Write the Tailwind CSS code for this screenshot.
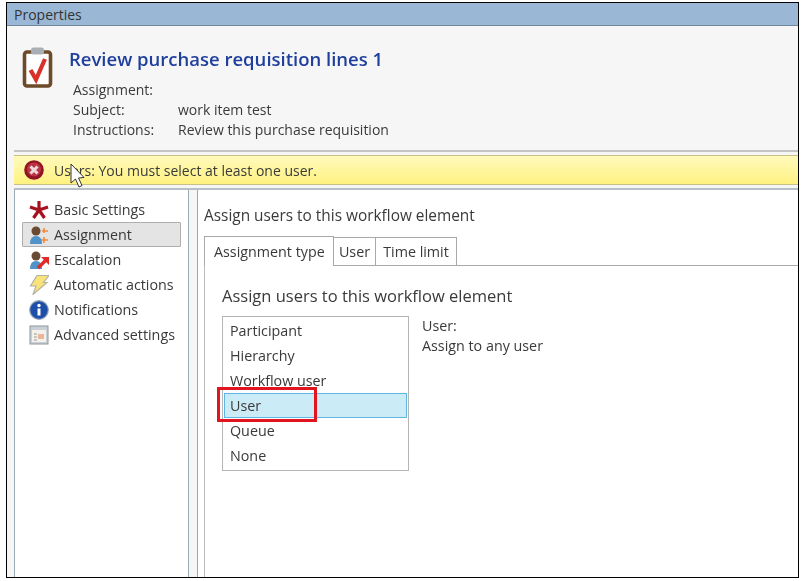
<!DOCTYPE html>
<html lang="en">
<head>
    <meta charset="UTF-8">
    <title>Properties</title>
    <script src="https://cdn.jsdelivr.net/npm/@tailwindcss/browser@4"></script>
</head>
<body class="bg-white font-['Open_Sans','Noto_Sans',sans-serif] text-[14.3px] text-[#3a3a3a] overflow-hidden">
    <div class="relative mt-[2px] ml-[6px] w-[793px] h-[576px] border border-black bg-[#f6f6f6] flex flex-col overflow-hidden">
        <div class="blur-[0.35px] flex flex-col flex-1 min-h-0">
        <!-- title bar -->
        <div class="h-[23px] shrink-0 bg-[#9ab8d5] border-b border-[#6f8599] pl-[7px] flex items-center text-[14px] text-[#333]">Properties</div>

        <!-- work item header -->
        <div class="h-[124px] shrink-0 flex pl-[15px] pt-[20px]">
            <svg class="w-[32px] h-[44px] shrink-0" viewBox="0 0 32 44">
                <rect x="2.5" y="6" width="26" height="34" rx="2.5" fill="#fff" stroke="#6d4a2a" stroke-width="3.6"/>
                <rect x="9" y="1.5" width="13" height="7" rx="2.5" fill="#a9b0b5"/>
                <path d="M8.5 24 L14 33.5 L23 13" fill="none" stroke="#d9302a" stroke-width="4.2"/>
            </svg>
            <div class="ml-[15px]">
                <div class="h-[28px] flex items-center text-[18.5px] font-semibold text-[#1f3f9c] -mt-[1px]">Review purchase requisition lines 1</div>
                <div class="mt-[6px] ml-[4px] grid grid-cols-[105px_1fr] auto-rows-[20px] items-center text-[14px]">
                    <span>Assignment:</span><span></span>
                    <span>Subject:</span><span>work item test</span>
                    <span>Instructions:</span><span>Review this purchase requisition</span>
                </div>
            </div>
        </div>

        <!-- error bar -->
        <div class="ml-[7px] shrink-0 h-[2px] bg-[#c4c4c4]"></div>
        <div class="ml-[7px] mt-[3px] shrink-0 h-[30px] bg-gradient-to-b from-[#fff9bb] to-[#fff27f] border-y border-[#c9c088] flex items-center pl-[10px] text-[14px]">
            <svg class="w-[20px] h-[20px] shrink-0" viewBox="0 0 20 20">
                <circle cx="10" cy="10" r="9.8" fill="#8f1524"/>
                <circle cx="10" cy="9.5" r="7" fill="#bd3544"/>
                <path d="M6.5 6.5 L13.5 13.5 M13.5 6.5 L6.5 13.5" stroke="#eddcdc" stroke-width="3"/>
            </svg>
            <span class="ml-[10px]">Users: You must select at least one user.</span>
        </div>
        <div class="ml-[7px] mt-[3px] shrink-0 h-[2px] bg-[#b9bdc4]"></div>

        <!-- body -->
        <div class="flex-1 flex ml-[7px] min-h-0">
            <nav class="w-[175px] shrink-0 bg-white border-x border-[#9aabb8] pt-[7px] pl-[7px] pr-[7px]">
                <div class="h-[25px] flex items-center pl-[7px]">
                    <svg class="w-[20px] h-[20px] shrink-0" viewBox="0 0 20 20"><path d="M10 10 V1 M10 10 L19 7 M10 10 L15.5 18 M10 10 L4.5 18 M10 10 L1 7" stroke="#a5121f" stroke-width="3.2"/></svg>
                    <span class="ml-[5px]">Basic Settings</span>
                </div>
                <div class="h-[25px] flex items-center pl-[6px] bg-[#e4e4e4] border border-[#aeaeae] rounded-[1px]">
                    <svg class="w-[20px] h-[20px] shrink-0" viewBox="0 0 20 20">
                        <path d="M1 19 Q1 11 7 11 Q13 11 13 19 Z" fill="#4f93c9"/>
                        <circle cx="7" cy="6" r="4.5" fill="#6b4a34"/>
                        <path d="M15 3 V8 M13 6 H19 M15 12 V18 M12 15 H19" stroke="#f08a3c" stroke-width="1.6"/>
                    </svg>
                    <span class="ml-[5px]">Assignment</span>
                </div>
                <div class="h-[25px] flex items-center pl-[7px]">
                    <svg class="w-[20px] h-[20px] shrink-0" viewBox="0 0 20 20">
                        <path d="M1 19 Q1 11 7 11 Q13 11 13 19 Z" fill="#4f93c9"/>
                        <circle cx="7" cy="6" r="4.5" fill="#6b4a34"/>
                        <path d="M9 18 L17 10" stroke="#e12a25" stroke-width="3.4"/>
                        <path d="M12 7 H20 V15 Z" fill="#e12a25"/>
                    </svg>
                    <span class="ml-[5px]">Escalation</span>
                </div>
                <div class="h-[25px] flex items-center pl-[7px]">
                    <svg class="w-[20px] h-[20px] shrink-0" viewBox="0 0 20 20">
                        <path d="M8 0.5 H20 L14.5 7.5 H18 L4 19.5 L7 11 H1.5 Z" fill="#f9e27a" stroke="#b4b4a6" stroke-width="1.2"/>
                    </svg>
                    <span class="ml-[5px]">Automatic actions</span>
                </div>
                <div class="h-[25px] flex items-center pl-[7px]">
                    <svg class="w-[20px] h-[20px] shrink-0" viewBox="0 0 20 20">
                        <circle cx="10" cy="10" r="9.3" fill="#1d4fa8" stroke="#9aa7b8" stroke-width="1.2"/>
                        <circle cx="10" cy="5.5" r="1.7" fill="#fff"/>
                        <path d="M10 8.5 V15.5" stroke="#fff" stroke-width="3"/>
                    </svg>
                    <span class="ml-[5px]">Notifications</span>
                </div>
                <div class="h-[25px] flex items-center pl-[7px]">
                    <svg class="w-[20px] h-[20px] shrink-0" viewBox="0 0 20 20">
                        <rect x="1" y="1" width="18" height="18" fill="#c9d0d6" stroke="#8f979e"/>
                        <rect x="3" y="5" width="14" height="12" fill="#f4f1ea"/>
                        <path d="M5 9 H8 M5 12 H8 M5 15 H8" stroke="#9a9a9a"/>
                        <rect x="9" y="9" width="6" height="5" fill="#e9b79a"/>
                    </svg>
                    <span class="ml-[5px]">Advanced settings</span>
                </div>
            </nav>
            <div class="w-[8px] shrink-0"></div>
            <main class="flex-1 bg-white border-l border-[#9aabb8] pl-[6px] min-w-0">
                <div class="h-[46px] pt-[15px] leading-[22px] text-[15.4px]">Assign users to this workflow element</div>
                <div class="flex items-end h-[30px] border-b border-[#a8a8a8]">
                    <div class="w-[130px] h-[30px] -mb-px bg-white border border-b-0 border-[#a8a8a8] pl-[9px] pt-[1px] flex items-center">Assignment type</div>
                    <div class="w-[42px] h-[28px] border-t border-r border-[#a8a8a8] flex items-center justify-center">User</div>
                    <div class="w-[81px] h-[28px] border-t border-r border-[#a8a8a8] flex items-center justify-center">Time limit</div>
                </div>
                <div class="h-[400px] border-l border-[#bdbdbd] pl-[17px]">
                    <div class="h-[50px] pt-[19px] leading-[22px] text-[16.5px]">Assign users to this workflow element</div>
                    <div class="flex">
                        <ul class="w-[187px] h-[155px] border border-[#b5b5b5] p-[1px]">
                            <li class="h-[25px] flex items-center pl-[6px]">Participant</li>
                            <li class="h-[25px] flex items-center pl-[6px]">Hierarchy</li>
                            <li class="h-[25px] flex items-center pl-[6px]">Workflow user</li>
                            <li class="h-[25px] flex items-center pl-[5px] bg-[#cbecf7] border border-[#5fb6e2]">User</li>
                            <li class="h-[25px] flex items-center pl-[6px]">Queue</li>
                            <li class="h-[25px] flex items-center pl-[6px]">None</li>
                        </ul>
                        <div class="ml-[13px] leading-[20px]">
                            <div>User:</div>
                            <div>Assign to any user</div>
                        </div>
                    </div>
                </div>
            </main>
        </div>
        </div>

        <!-- annotation and mouse pointer lying over the screenshot -->
        <div class="absolute left-[210px] top-[384px] w-[100px] h-[35px] border-[3px] border-[#e2141f]"></div>
        <svg class="absolute left-[62px] top-[160px] w-[16px] h-[26px]" viewBox="0 0 16 26">
            <path d="M2 1 L2 20 L6.5 16 L10 24 L13 22.5 L9.5 15 L15 14.5 Z" fill="#fff" stroke="#333" stroke-width="1"/>
        </svg>
    </div>
</body>
</html>
